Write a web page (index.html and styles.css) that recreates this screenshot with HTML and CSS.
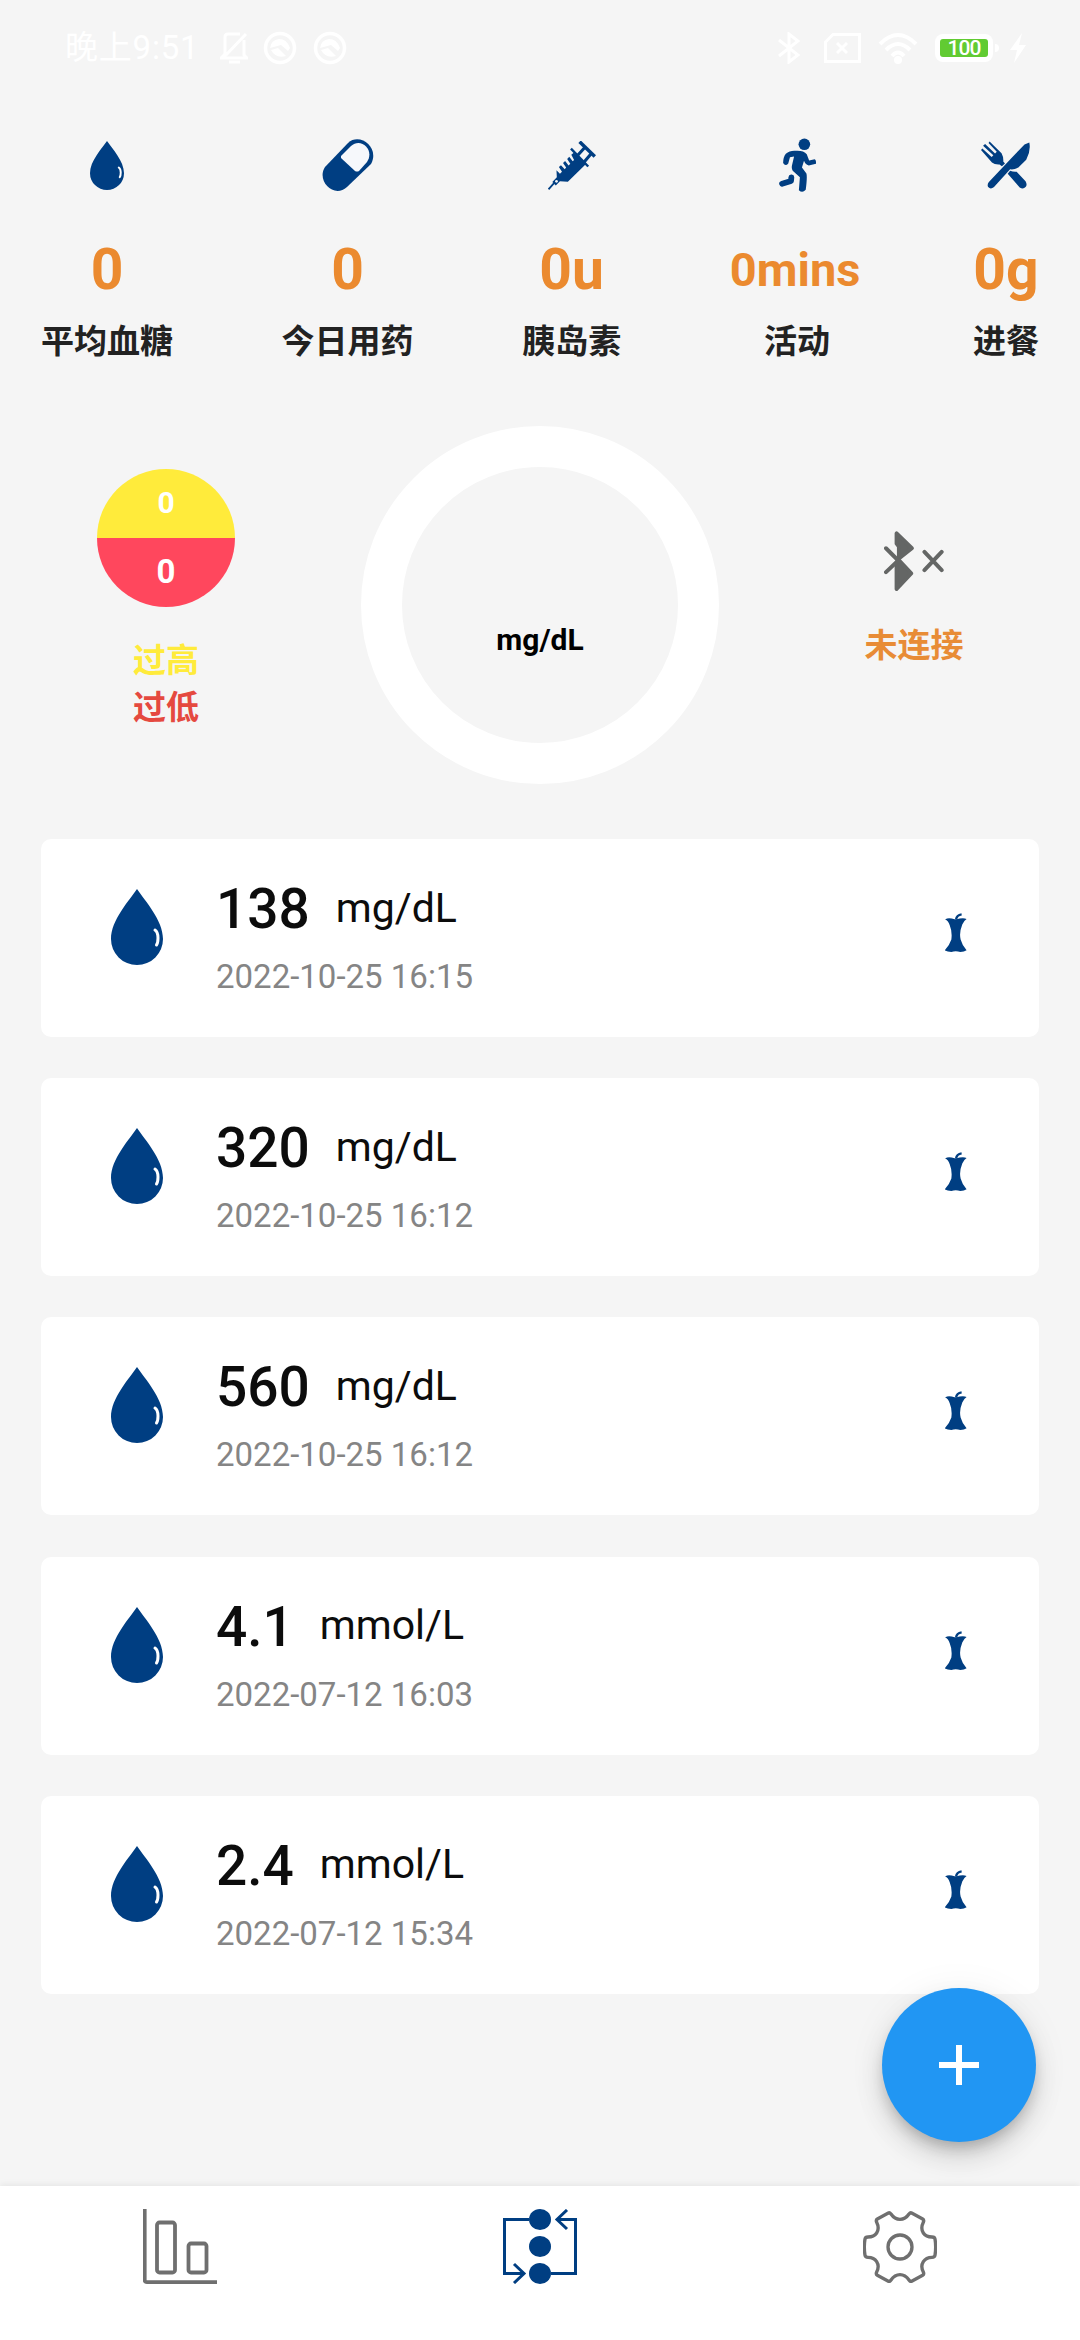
FILE: index.html
```html
<!DOCTYPE html>
<html lang="zh-CN">
<head>
<meta charset="utf-8">
<title>血糖</title>
<link rel="stylesheet" href="styles.css">
</head>
<body>
<svg class="symbols" width="0" height="0">
  <symbol id="drop" viewBox="0 0 52 76">
    <path fill="#003e82" d="M26 0C34 12 52 31 52 50A26 26 0 0 1 0 50C0 31 18 12 26 0Z"/>
    <path fill="none" stroke="#fff" stroke-width="3" stroke-linecap="round" d="M44 41Q47 43 47 49Q47 54 45.500 56"/>
  </symbol>
  <symbol id="apple" viewBox="256 248 66 118">
    <path fill="#003e82" d="M256 268Q264 262 276 265Q288 270 300 265Q312 262 321 266Q314 270 308 283Q298 308 303 328Q307 344 321 361Q314 366 302 366Q288 361 275 366Q262 366 255 361Q269 346 275 328Q278 304 270 285Q266 272 256 268Z"/>
    <path fill="none" stroke="#003e82" stroke-width="7" d="M289 268Q291 254 306 252"/>
  </symbol>
  <symbol id="blocked" viewBox="0 0 34 34">
    <circle cx="17" cy="17" r="14.5" fill="none" stroke="#fff" stroke-width="3.5"/>
    <path fill="#fff" d="M7 17Q8 9 16 8Q24 8 27 17L25 20L18 14Z"/>
    <path d="M8 19L15 17L23 25Q13 28 8 19Z" fill="#fff"/>
  </symbol>
</svg>

<header class="status">
  <div class="status-left">
    <span class="clock">晚上9:51</span>
    <svg class="bell" viewBox="0 0 28 32" fill="none" stroke="#fff" stroke-width="3"><path d="M5 25V5Q5 2 8 2H20M24 8V23L27 26H1L6 21M26 2L6 23M9 30H20"/></svg>
    <svg class="dnd" viewBox="0 0 34 34"><use href="#blocked"/></svg>
    <svg class="dnd" viewBox="0 0 34 34"><use href="#blocked"/></svg>
  </div>
  <div class="status-right">
    <svg class="bt" viewBox="0 0 22 32" fill="none" stroke="#fff" stroke-width="3"><path d="M1 8L20 23L11 30V2L20 9L1 24"/></svg>
    <svg class="sim" viewBox="0 0 37 30" fill="none" stroke="#fff" stroke-width="3"><path d="M9 1.500H35.500V28.500H1.500V9ZM13 10L23 20M23 10L13 20"/></svg>
    <svg class="wifi" viewBox="0 0 40 32" fill="none" stroke="#fff" stroke-width="4"><path d="M2 12Q20 -6 38 12M8 18Q20 6 32 18M14 24Q20 17 26 24"/><circle cx="20" cy="28" r="2" fill="#fff"/></svg>
    <div class="battery"><div class="charge">100</div></div>
    <i class="nub"></i>
    <svg class="bolt" viewBox="0 0 16 30"><path fill="#fff" d="M12 0L0 17H7L4 30L16 12H9Z"/></svg>
  </div>
</header>

<section class="stats">
  <div class="stat">
    <div class="stat-icon"><svg width="34" height="49" viewBox="0 0 52 76" preserveAspectRatio="none"><use href="#drop"/></svg></div>
    <div class="stat-value">0</div><div class="label">平均血糖</div>
  </div>
  <div class="stat">
    <div class="stat-icon"><svg width="52" height="54" viewBox="0 0 52 54"><path fill="#003e82" d="M26 5C38-6 58 10 49 26L25 49C12 61-6 43 3 29Z"/><path fill="#f6f8fb" d="M19 18L29 8C39-1 53 12 45 24L37 33Q35 34 33 33L19 20Z"/></svg></div>
    <div class="stat-value">0</div><div class="label">今日用药</div>
  </div>
  <div class="stat">
    <div class="stat-icon"><svg width="48" height="49" viewBox="23 424 138 142"><g fill="none" stroke="#003e82"><path stroke-width="5" d="M24 564L40 546"/><path stroke-width="10" d="M114 426L158 469"/><path stroke-width="7" d="M89 446L139 498"/><path stroke-width="9" d="M106 468L129 443M126 486L148 460"/></g><path fill="#003e82" d="M97 458L134 489L80 542L57 541L45 553L35 543L48 529L47 509L57 519L63 513L54 499L60 494L71 506L75 501L66 488L72 482L82 495L87 490L78 476L84 470L94 483L98 479L90 464Z"/><circle cx="47" cy="541" r="4" fill="#f5f5f5"/></svg></div>
    <div class="stat-value">0u</div><div class="label">胰岛素</div>
  </div>
  <div class="stat">
    <div class="stat-icon"><svg width="37" height="54" viewBox="688 416 108 157"><circle cx="762" cy="434" r="17" fill="#003e82"/><path fill="#003e82" d="M708 462Q720 451 738 453Q760 452 769 463L776 481L792 478Q797 480 796 491L775 496Q764 492 761 482L755 502L768 519Q771 528 766 567Q756 578 746 568L749 530L728 511Q723 504 727 491L732 470L720 472L715 490Q707 500 700 489Q700 472 708 462Z"/><path fill="none" stroke="#003e82" stroke-width="17" stroke-linecap="round" stroke-linejoin="round" d="M697 549L723 541L724 531"/></svg></div>
    <div class="stat-value small">0mins</div><div class="label">活动</div>
  </div>
  <div class="stat">
    <div class="stat-icon"><svg width="49" height="48" viewBox="1278 426 143 139"><path fill="#003e82" d="M1419 430Q1424 455 1410 480L1387 503Q1374 510 1363 508L1316 560Q1306 568 1299 560Q1295 553 1301 545L1365 477L1405 436ZM1363 512Q1372 516 1382 515L1408 543Q1414 553 1408 560Q1401 567 1391 561L1356 521ZM1300 431L1303 427L1338 461Q1344 472 1343 485L1348 491L1339 499L1332 494Q1318 495 1310 488L1278 452L1282 447L1309 472L1314 467L1284 439L1290 434L1319 462L1324 457Z"/></svg></div>
    <div class="stat-value">0g</div><div class="label">进餐</div>
  </div>
</section>

<section class="overview">
  <div class="side range">
    <div class="split"><div class="high">0</div><div class="low">0</div></div>
    <div class="legend high-text">过高</div>
    <div class="legend low-text">过低</div>
  </div>
  <div class="ring">mg/dL</div>
  <div class="side device">
    <svg width="60" height="60" viewBox="1032 392 181 181" fill="none" stroke="#646665" stroke-width="12" stroke-linecap="round" stroke-linejoin="round"><path fill="#646665" d="M1070 399V430L1077 439V475L1116 444Z"/><path fill="#646665" d="M1070 567V487L1078 481L1114 520Z"/><path d="M1038 444L1075 481L1038 516M1154 455L1206 510M1206 455L1154 510"/></svg>
    <div class="legend device-text">未连接</div>
  </div>
</section>

<main class="list">
  <article class="card"><svg class="card-drop"><use href="#drop"/></svg><div class="reading"><div class="line"><b>138</b><span>mg/dL</span></div><time>2022-10-25 16:15</time></div><svg class="apple"><use href="#apple"/></svg></article>
  <article class="card"><svg class="card-drop"><use href="#drop"/></svg><div class="reading"><div class="line"><b>320</b><span>mg/dL</span></div><time>2022-10-25 16:12</time></div><svg class="apple"><use href="#apple"/></svg></article>
  <article class="card"><svg class="card-drop"><use href="#drop"/></svg><div class="reading"><div class="line"><b>560</b><span>mg/dL</span></div><time>2022-10-25 16:12</time></div><svg class="apple"><use href="#apple"/></svg></article>
  <article class="card"><svg class="card-drop"><use href="#drop"/></svg><div class="reading"><div class="line"><b>4.1</b><span>mmol/L</span></div><time>2022-07-12 16:03</time></div><svg class="apple"><use href="#apple"/></svg></article>
  <article class="card"><svg class="card-drop"><use href="#drop"/></svg><div class="reading"><div class="line"><b>2.4</b><span>mmol/L</span></div><time>2022-07-12 15:34</time></div><svg class="apple"><use href="#apple"/></svg></article>
</main>

<button class="fab" aria-label="添加"><svg width="40" height="40" viewBox="0 0 40 40"><path d="M0 20H40M20 0V40" stroke="#fff" stroke-width="6"/></svg></button>

<nav class="tabs">
  <div class="tab"><svg width="74" height="75" viewBox="0 0 74 75" fill="none" stroke="#6f6f6f" stroke-width="3.800"><path d="M1.700 0V71Q1.700 73.100 4 73.100H74"/><rect x="14" y="13.500" width="18" height="50" rx="2.500"/><rect x="45.500" y="34.500" width="18" height="29" rx="2.500"/></svg></div>
  <div class="tab"><svg width="74" height="75" viewBox="0 0 74 75" fill="none" stroke="#003e82" stroke-width="3"><path d="M26 10.500H1.500V64.500H19M48 64.500H72.500V10.500H54M64 1L54 10.500L64 20M11 55L21 64.500L11 74"/><g fill="#003e82" stroke="none"><ellipse cx="37" cy="10.500" rx="11" ry="10.500"/><ellipse cx="37" cy="37.500" rx="11" ry="10.500"/><ellipse cx="37" cy="64.500" rx="11" ry="10.500"/></g></svg></div>
  <div class="tab"><svg width="74" height="72" viewBox="69 752 222 214" fill="none" stroke="#6f6f6f" stroke-width="10" stroke-linejoin="round"><path d="M145 757Q149 755 153 760Q164 776 180 776Q196 776 207 760Q211 755 215 757L248 775Q253 778 250 785Q241 803 250 817Q258 829 276 829Q284 829 285 835Q289 859 285 884Q284 890 276 890Q258 890 250 903Q241 917 250 934Q253 941 248 944L215 962Q211 964 207 958Q196 942 180 942Q164 942 153 958Q149 964 145 962L112 944Q107 941 110 934Q119 917 110 903Q102 890 84 890Q76 890 75 884Q71 859 75 835Q76 829 84 829Q102 829 110 817Q119 803 110 785Q107 778 112 775Z"/><circle cx="180" cy="859" r="36"/></svg></div>
</nav>
</body>
</html>
```
FILE: styles.css
```css
* { box-sizing: border-box; }

body {
  margin: 0;
  width: 1080px;
  height: 2340px;
  overflow: hidden;
  display: flex;
  flex-direction: column;
  position: relative;
  background: #f5f5f5;
  font-family: Roboto, "Noto Sans CJK SC", sans-serif;
}

svg { display: block; flex: none; }
.symbols { position: absolute; }

.status {
  height: 95px;
  flex: none;
  padding: 0 54px 0 65px;
  display: flex;
  align-items: center;
  justify-content: space-between;
  color: #fff;
}
.status-left, .status-right { display: flex; align-items: center; }
.clock { width: 155px; font-size: 33px; line-height: 48px; letter-spacing: 0.8px; white-space: nowrap; }
.bell { width: 28px; height: 32px; margin-right: 15px; }
.dnd { width: 34px; height: 34px; margin-right: 16px; }
.bt { width: 22px; height: 32px; margin-right: 24px; }
.sim { width: 37px; height: 30px; margin-right: 17px; }
.wifi { width: 40px; height: 32px; margin-right: 17px; }
.battery { width: 58px; height: 28px; padding: 5px; background: #fff; border-radius: 8px; }
.charge {
  height: 18px;
  border-radius: 3px;
  background: #61cb32;
  font-size: 21px;
  line-height: 18px;
  letter-spacing: -1px;
  font-weight: 500;
  text-align: center;
}
.nub { width: 4px; height: 8px; margin: 0 11px 0 2px; background: #fff; border-radius: 0 4px 4px 0; }
.bolt { width: 16px; height: 30px; }

.stats {
  flex: none;
  height: 331px;
  padding: 29px 41px 0;
  display: flex;
  justify-content: space-between;
}
.stat { display: flex; flex-direction: column; align-items: center; }
.stat-icon { height: 82px; display: flex; align-items: center; }
.stat-value { height: 80px; margin: 24px 0 14px; line-height: 80px; font-size: 57px; font-weight: 700; color: #eb8a2f; }
.stat-value.small { font-size: 47px; padding-right: 4px; }
.label { height: 36px; line-height: 36px; font-size: 33px; font-weight: 700; color: #222; white-space: nowrap; }

.overview {
  flex: none;
  height: 358px;
  padding: 0 41px;
  display: flex;
  justify-content: space-between;
}
.side { width: 250px; display: flex; flex-direction: column; align-items: center; }
.range { padding-top: 43px; }
.split { width: 138px; height: 138px; margin-bottom: 30px; border-radius: 50%; overflow: hidden; color: #fff; font-weight: 700; text-align: center; }
.split div { height: 69px; line-height: 67px; }
.high { background: #ffeb3b; font-size: 30px; }
.low { background: #ff475d; font-size: 33px; }
.legend { height: 47px; line-height: 47px; font-size: 33px; font-weight: 700; }
.high-text { color: #ffeb3b; }
.low-text { color: #e5493f; }
.ring {
  width: 358px;
  height: 358px;
  border: 41px solid #fff;
  border-radius: 50%;
  padding-top: 153px;
  text-align: center;
  font-size: 30px;
  font-weight: 700;
  line-height: 40px;
  color: #000;
}
.device { padding-top: 105px; gap: 31px; }
.device-text { color: #e88c36; }

.list { padding: 55px 41px 0; display: flex; flex-direction: column; gap: 41.2px; }
.card {
  height: 198px;
  flex: none;
  padding: 0 72px 0 70px;
  display: flex;
  align-items: flex-start;
  background: #fff;
  border-radius: 10px;
}
.card-drop { width: 52px; height: 76px; margin-top: 50px; }
.reading { margin-left: 53px; padding-top: 37px; }
.line { height: 66px; display: flex; align-items: center; gap: 26px; color: #0c0c0c; }
.line b { font-size: 55px; font-weight: 500; }
.line span { font-size: 41px; margin-top: -3px; }
.reading time { display: block; margin-top: 15px; line-height: 40px; font-size: 33px; color: #858585; }
.apple { width: 22px; height: 39px; margin: 74px 0 0 auto; }

.fab {
  position: absolute;
  left: 882px;
  top: 1988px;
  width: 154px;
  height: 154px;
  border: 0;
  border-radius: 50%;
  background: #2196f3;
  display: flex;
  align-items: center;
  justify-content: center;
  box-shadow: 0 9px 14px -3px rgba(0,0,0,.2), 0 16px 28px rgba(0,0,0,.12), 0 3px 40px rgba(0,0,0,.06);
}

.tabs {
  flex: none;
  height: 154px;
  margin-top: auto;
  display: flex;
  background: #fff;
  box-shadow: 0 -2px 6px rgba(0,0,0,.06);
}
.tab { flex: 1; height: 121px; display: flex; align-items: center; justify-content: center; }
```
